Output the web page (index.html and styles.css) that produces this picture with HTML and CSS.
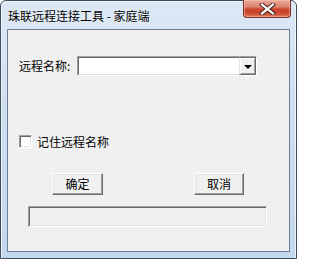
FILE: index.html
```html
<!DOCTYPE html>
<html>
<head>
<meta charset="utf-8">
<link rel="stylesheet" href="styles.css">
</head>
<body>
<div class="window">
  <div class="titlebar">
    <div class="title">珠联远程连接工具 - 家庭端</div>
    <div class="close">
      <svg width="17" height="12" viewBox="0 0 17 12">
        <path d="M3 1.5 L14 10.5 M14 1.5 L3 10.5" stroke="#4a2a24" stroke-width="4.2" stroke-linecap="square" fill="none"/>
        <path d="M3 1.5 L14 10.5 M14 1.5 L3 10.5" stroke="#ffffff" stroke-width="2.2" stroke-linecap="square" fill="none"/>
      </svg>
    </div>
  </div>
  <div class="client">
    <div class="row-name">
      <span class="label">远程名称:</span>
      <div class="combo">
        <div class="combo-field"></div>
        <div class="combo-btn"><span class="arrow"></span></div>
      </div>
    </div>
    <div class="row-check">
      <span class="checkbox"></span>
      <span class="check-label">记住远程名称</span>
    </div>
    <div class="row-buttons">
      <div class="btn btn-ok">确定</div>
      <div class="btn btn-cancel">取消</div>
    </div>
    <div class="progress"></div>
  </div>
</div>
</body>
</html>
```

FILE: styles.css
```css
html, body {
  margin: 0;
  padding: 0;
  background: #ffffff;
}
body {
  font-family: "Noto Sans CJK SC", "Noto Sans", sans-serif;
  font-size: 12px;
  color: #000;
}
.window {
  width: 297px;
  height: 259px;
  box-sizing: border-box;
  border: 1px solid #3f4c5b;
  border-radius: 6px 6px 0 0;
  background: linear-gradient(to bottom, #dde8f5 0%, #cfdff2 40%, #c3d7ee 100%);
  padding: 0 6px 6px 6px;
  display: flex;
  flex-direction: column;
  box-shadow: inset 1px 1px 0 #eef4fb, inset -1px 0 0 #eef4fb;
}
.titlebar {
  height: 28px;
  display: flex;
  align-items: flex-start;
  justify-content: space-between;
}
.title {
  margin-top: 7px;
  margin-left: 1px;
  line-height: 16px;
  font-size: 12px;
  color: #000;
  text-shadow: 0 0 3px rgba(255,255,255,0.9);
}
.close {
  width: 48px;
  height: 18px;
  box-sizing: border-box;
  margin-right: -1px;
  margin-top: -1px;
  border: 1px solid #7a2f22;
  border-top: none;
  border-radius: 0 0 4px 4px;
  background: linear-gradient(to bottom, #e9a999 0%, #dd8470 40%, #c8442b 55%, #c9462b 75%, #e07a5c 100%);
  box-shadow: inset 0 0 0 1px rgba(255,210,200,0.45);
  display: flex;
  align-items: center;
  justify-content: center;
}
.close svg { display: block; }
.client {
  width: 283px;
  height: 223px;
  box-sizing: border-box;
  border: 1px solid #6f7f92;
  background: #f0f0f0;
  padding-left: 11px;
  display: flex;
  flex-direction: column;
}
.row-name {
  margin-top: 26px;
  height: 20px;
  display: flex;
  align-items: center;
}
.label {
  width: 58px;
  line-height: 14px;
  white-space: nowrap;
}
.combo {
  width: 180px;
  height: 20px;
  box-sizing: border-box;
  border-style: solid;
  border-width: 1px;
  border-color: #a0a0a0 #ffffff #ffffff #a0a0a0;
  display: flex;
}
.combo-field {
  flex: 1;
  box-sizing: border-box;
  border-style: solid;
  border-width: 1px 0 1px 1px;
  border-color: #696969 #e3e3e3 #e3e3e3 #696969;
  background: #ffffff;
}
.combo-btn {
  width: 17px;
  box-sizing: border-box;
  background: #f0f0f0;
  border-style: solid;
  border-width: 1px;
  border-color: #e3e3e3 #696969 #696969 #e3e3e3;
  box-shadow: inset 1px 1px 0 #ffffff, inset -1px -1px 0 #a0a0a0;
  border-top: 1px solid #696969;
  display: flex;
  align-items: center;
  justify-content: center;
}
.combo-btn {
  border-color: #696969 #696969 #696969 #e3e3e3;
}
.arrow {
  width: 0;
  height: 0;
  border-left: 4px solid transparent;
  border-right: 4px solid transparent;
  border-top: 4px solid #000;
  margin-top: 1px;
}
.row-check {
  margin-top: 59px;
  height: 13px;
  display: flex;
  align-items: center;
}
.checkbox {
  width: 13px;
  height: 13px;
  box-sizing: border-box;
  border-style: solid;
  border-width: 1px;
  border-color: #a0a0a0 #ffffff #ffffff #a0a0a0;
  box-shadow: inset 1px 1px 0 #696969, inset -1px -1px 0 #e3e3e3;
  background: #ffffff;
}
.check-label {
  margin-left: 5px;
  line-height: 14px;
}
.row-buttons {
  margin-top: 25px;
  height: 22px;
  display: flex;
}
.btn {
  height: 22px;
  box-sizing: border-box;
  background: #f0f0f0;
  border-style: solid;
  border-width: 1px;
  border-color: #ffffff #696969 #696969 #ffffff;
  box-shadow: inset -1px -1px 0 #a0a0a0, inset 1px 1px 0 #e3e3e3;
  display: flex;
  align-items: center;
  justify-content: center;
  line-height: 14px;
}
.btn-ok {
  width: 51px;
  margin-left: 33px;
}
.btn-cancel {
  width: 50px;
  margin-left: 91px;
}
.progress {
  margin-top: 11px;
  margin-left: 9px;
  width: 239px;
  height: 21px;
  box-sizing: border-box;
  border-style: solid;
  border-width: 1px;
  border-color: #a0a0a0 #ffffff #ffffff #a0a0a0;
  box-shadow: inset 1px 1px 0 #696969, inset -1px -1px 0 #e3e3e3;
  background: #f0f0f0;
}
```
